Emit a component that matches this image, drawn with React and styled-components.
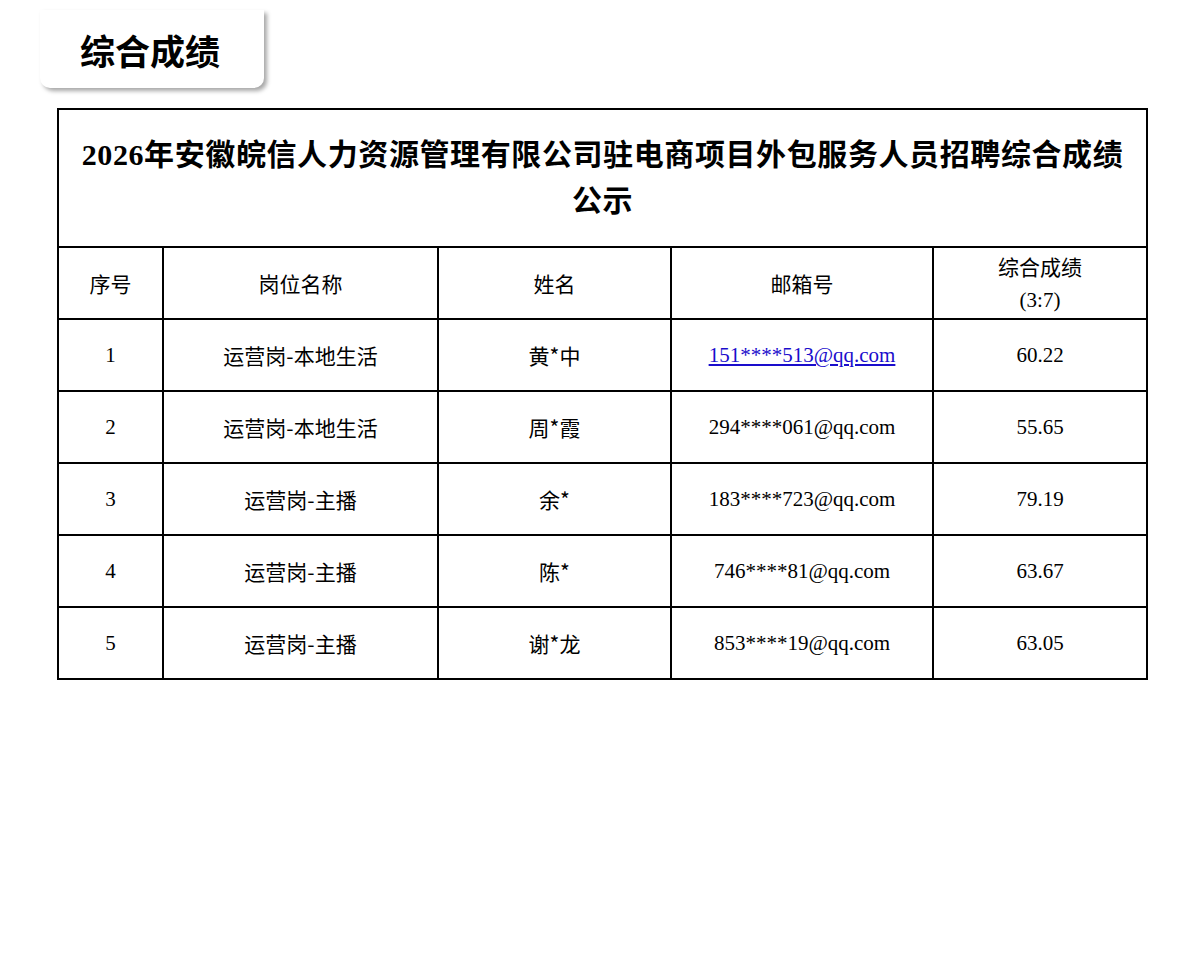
import React from "react";
import styled, { createGlobalStyle } from "styled-components";

const Global = createGlobalStyle`
  body { margin: 0; background: #fff; font-family: "Liberation Serif", "Noto Sans CJK SC", serif; color: #000; }
`;
const Page = styled.div`
  padding: 10px 0 0 0;
`;
const Tab = styled.div`
  margin-left: 40px;
  width: 224px;
  height: 78px;
  box-sizing: border-box;
  border-radius: 0 0 10px 10px;
  box-shadow: 3px 3px 4px rgba(0,0,0,0.35);
  display: flex;
  align-items: center;
  padding-left: 40px;
  font-family: "Noto Sans CJK SC", sans-serif;
  font-weight: 700;
  font-size: 35px;
`;
const Table = styled.table`
  margin: 20px 0 0 57px;
  width: 1089px;
  border-collapse: collapse;
  table-layout: fixed;
  & td { border: 2px solid #000; text-align: center; padding: 0; }
`;
const TitleCell = styled.td`
  height: 136px;
  font-weight: 700;
  font-size: 30px;
  line-height: 46px;
  letter-spacing: 0.6px;
  padding: 0 16px !important;
  font-family: "Liberation Serif", "Noto Sans CJK SC", serif;
`;
const Cell = styled.td`
  height: ${p => p.$h || 70}px;
  font-size: ${p => (p.$cn ? 21 : 21)}px;
  font-family: ${p => p.$cn ? `"Noto Sans CJK SC", sans-serif` : `"Liberation Serif", "Noto Sans CJK SC", serif`};
  line-height: 32px;
`;
const Link = styled.a`
  color: #1a0dcc;
  text-decoration: underline;
`;
const Sub = styled.span`
  font-family: "Liberation Serif", serif;
`;

const rows = [
  ["1", "运营岗-本地生活", "黄*中", "151****513@qq.com", "60.22", true],
  ["2", "运营岗-本地生活", "周*霞", "294****061@qq.com", "55.65"],
  ["3", "运营岗-主播", "余*", "183****723@qq.com", "79.19"],
  ["4", "运营岗-主播", "陈*", "746****81@qq.com", "63.67"],
  ["5", "运营岗-主播", "谢*龙", "853****19@qq.com", "63.05"],
];

export default function App() {
  return (
    <Page>
      <Global />
      <Tab>综合成绩</Tab>
      <Table>
        <colgroup>
          <col style={{ width: 105 }} />
          <col style={{ width: 275 }} />
          <col style={{ width: 233 }} />
          <col style={{ width: 262 }} />
          <col style={{ width: 214 }} />
        </colgroup>
        <tbody>
          <tr><TitleCell colSpan={5}>2026年安徽皖信人力资源管理有限公司驻电商项目外包服务人员招聘综合成绩公示</TitleCell></tr>
          <tr>
            <Cell $cn $h={70}>序号</Cell>
            <Cell $cn>岗位名称</Cell>
            <Cell $cn>姓名</Cell>
            <Cell $cn>邮箱号</Cell>
            <Cell $cn>综合成绩<br /><Sub>(3:7)</Sub></Cell>
          </tr>
          {rows.map(r => (
            <tr key={r[0]}>
              <Cell>{r[0]}</Cell>
              <Cell $cn>{r[1]}</Cell>
              <Cell $cn>{r[2]}</Cell>
              <Cell>{r[5] ? <Link href="#">{r[3]}</Link> : r[3]}</Cell>
              <Cell>{r[4]}</Cell>
            </tr>
          ))}
        </tbody>
      </Table>
    </Page>
  );
}
